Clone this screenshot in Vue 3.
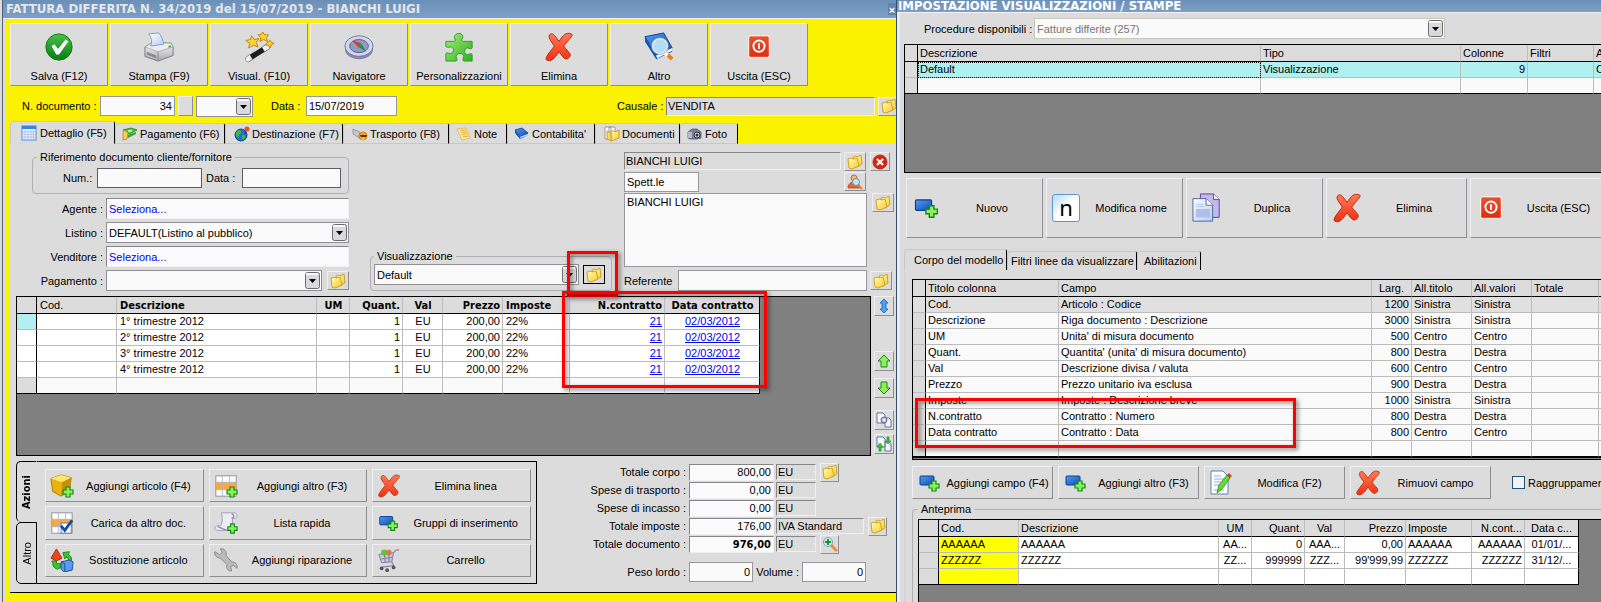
<template>
  <!-- icon sprite -->
  <svg class="sprite" aria-hidden="true">
    <defs>
      <linearGradient id="gGreen" x1="0" y1="0" x2="0" y2="1">
        <stop offset="0" stop-color="#4cc04a" /><stop offset="1" stop-color="#067d12" />
      </linearGradient>
      <linearGradient id="gLime" x1="0" y1="0" x2="1" y2="1">
        <stop offset="0" stop-color="#a4f07a" /><stop offset="1" stop-color="#2fae22" />
      </linearGradient>
      <linearGradient id="gRed" x1="0" y1="0" x2="0" y2="1">
        <stop offset="0" stop-color="#ff7a55" /><stop offset="1" stop-color="#f03010" />
      </linearGradient>
      <linearGradient id="gBlue" x1="0" y1="0" x2="1" y2="1">
        <stop offset="0" stop-color="#4f9cf0" /><stop offset="1" stop-color="#0b4fb5" />
      </linearGradient>
      <linearGradient id="gGold" x1="0" y1="0" x2="1" y2="1">
        <stop offset="0" stop-color="#fffbb4" /><stop offset="1" stop-color="#f9cc2c" />
      </linearGradient>
      <linearGradient id="gGrey" x1="0" y1="0" x2="0" y2="1">
        <stop offset="0" stop-color="#fbfbfb" /><stop offset="1" stop-color="#a9a9ad" />
      </linearGradient>
      <linearGradient id="gPage" x1="0" y1="0" x2="1" y2="1">
        <stop offset="0" stop-color="#ffffff" /><stop offset="1" stop-color="#b9cdf2" />
      </linearGradient>
    </defs>
    <symbol id="check" viewBox="0 0 32 32">
      <circle cx="16" cy="16" r="14" fill="url(#gGreen)" stroke="#0a7a14" />
      <path d="M8 15l3-2 4 5 8-10 3 2-10 14h-3z" fill="#fff" />
    </symbol>
    <symbol id="printer" viewBox="0 0 32 32">
      <path d="M1 16l8-5 20 1 2 4v9l-16 6L1 26z" fill="url(#gGrey)" stroke="#77777c" />
      <path d="M1 16l14 5 16-5-2-4-20-1z" fill="#ededf0" stroke="#8c8c90" stroke-width=".6" />
      <path d="M15 21v10" stroke="#88888c" />
      <path d="M5 2l11-1c2 3 4 6 5 12l-14 2c2-5 1-9-2-13z" fill="url(#gPage)" stroke="#6f9ed2" />
      <path d="M3 21l10 4v3L3 24z" fill="#8a8a8e" /><path d="M26 16l3-1" stroke="#38c43a" stroke-width="2" />
    </symbol>
    <symbol id="wand" viewBox="0 0 32 32">
      <path d="M2 27L24 13l3 5L5 32z" fill="#1c1c1e" /><path d="M2 27l4-3 3 5-4 3c-3 0-4-2-3-5z" fill="#f1f1f4" stroke="#66666a" stroke-width=".6" />
      <path d="M19 16l5-3c2 0 4 3 3 5l-5 3z" fill="#f1f1f4" stroke="#66666a" stroke-width=".6" />
      <g fill="#ffd22e" stroke="#b87806" stroke-width=".9">
        <path d="M8 4l3 4 5-1-3 4 2 5-5-2-5 3 1-5-4-3 5-1z" /><path d="M20 0l2 3h4l-2 3 1 4-4-2-4 2 1-4-3-3 4-1z" />
        <path d="M28 9l1 2 3 1-3 2-1 3-2-3h-3l2-3z" />
      </g>
    </symbol>
    <symbol id="compass" viewBox="0 0 32 32">
      <ellipse cx="16" cy="18" rx="15" ry="11" fill="#8686b4" /><ellipse cx="16" cy="15" rx="15" ry="11" fill="#d4d4ef" stroke="#7272a4" />
      <ellipse cx="16" cy="15" rx="10" ry="7" fill="#8e9cc0" stroke="#5c5c8c" /><path d="M9 9l9 3-3 4z" fill="#e43318" /><path d="M24 21l-9-5 3-4z" fill="#17935a" />
    </symbol>
    <symbol id="puzzle" viewBox="0 0 32 32">
      <path d="M2 10h9c2 0 1-2 0-4 0-6 10-6 9 0-1 2-2 4 1 4h9v7c-1 2-3 0-5 0-4 0-4 7 0 7 2 0 4-2 5 0v7h-9c-2-1 0-3 0-5 0-4-8-4-8 0 0 2 2 4 0 5H2v-8c1-2 3 0 5 0 4-1 4-8 0-7-2 0-5 1-5-1z" fill="url(#gLime)" stroke="#2a9c22" />
    </symbol>
    <symbol id="redx" viewBox="0 0 32 32">
      <path d="M6 3c3-3 5 0 10 7 5-7 7-10 13-8 3 1-1 4-8 13 5 7 9 8 6 12-3 3-5 3-11-6-5 8-9 11-13 9-3-2 3-8 8-15C7 9 4 6 6 3z" fill="url(#gRed)" stroke="#b92408" />
    </symbol>
    <symbol id="booklens" viewBox="0 0 32 32">
      <path d="M1 5l20-4 9 16-17 8z" fill="url(#gBlue)" stroke="#0b3d92" /><path d="M1 5v5l12 19 17-8v-4l-17 8z" fill="#0d57bd" /><path d="M13 25l17-8v3l-16 8z" fill="#fff" />
      <path d="M23 22l7 7" stroke="#f07a1c" stroke-width="4" /><path d="M22 22l3 3" stroke="#fff" stroke-width="4" />
      <circle cx="17" cy="15" r="8" fill="#bfe6fa" fill-opacity=".92" stroke="#e6e6ee" stroke-width="2" /><circle cx="17" cy="15" r="9" fill="none" stroke="#7b8ca8" stroke-width=".6" />
    </symbol>
    <symbol id="power" viewBox="0 0 32 32">
      <rect x="5" y="4" width="22" height="23" rx="2" fill="url(#gRed)" stroke="#fff" />
      <rect x="6" y="5" width="20" height="21" rx="1" fill="#cc2c0c" fill-opacity=".5" />
      <circle cx="16" cy="15" r="6" fill="none" stroke="#fff" stroke-width="2" /><path d="M16 12v6" stroke="#fff" stroke-width="2" />
    </symbol>
    <symbol id="folder" viewBox="0 0 16 16">
      <path d="M6 3l3-1 1 1 4-2 1 9-6 3z" fill="url(#gGold)" stroke="#c4930c" stroke-width=".8" />
      <path d="M1 5l4-1 1 1 4-1 2 8-7 3-3-1z" fill="url(#gGold)" stroke="#c4930c" stroke-width=".8" />
    </symbol>
    <symbol id="sheet" viewBox="0 0 16 16">
      <rect x="1" y="1" width="14" height="14" fill="#eef3ff" stroke="#4a8be0" /><path d="M1 1h14v3H1z" fill="#2e86ea" />
      <path d="M2 7h12M2 9.500h12M2 12h12M4 5v9M7 5v9M10 5v9M12.500 5v9" stroke="#a9bde2" stroke-width=".8" />
    </symbol>
    <symbol id="money" viewBox="0 0 16 16">
      <path d="M1 4l8-2 6 2-8 4z" fill="#4fc83c" stroke="#1c7d18" stroke-width=".8" /><path d="M1 5c2-1 4 0 5 2l-1 6-4 1z" fill="#f5cf56" stroke="#a87a10" stroke-width=".7" />
      <path d="M6 9l8-3v2l-8 4z" fill="#35a42c" /><ellipse cx="8" cy="5" rx="2" ry="1" fill="#d8ffcc" />
    </symbol>
    <symbol id="globe" viewBox="0 0 16 16">
      <circle cx="7" cy="9" r="6" fill="#1d6fd0" stroke="#0d4790" /><path d="M3 5c3-2 5 0 4 2S4 9 5 12c-3-1-4-5-2-7zM8 9c2 0 4 0 3 3l-3 2z" fill="#3fba3e" />
      <path d="M11 8l1-4" stroke="#7a1a08" /><circle cx="13" cy="3" r="2.500" fill="#ec4a2a" />
    </symbol>
    <symbol id="transport" viewBox="0 0 16 16">
      <path d="M1 3l7 3-1 6-6-4z" fill="#c7c7cb" stroke="#8a8a8e" stroke-width=".7" /><circle cx="11" cy="10" r="4" fill="#f5a91c" stroke="#b56b05" stroke-width=".7" />
      <path d="M8 9h7l-1 2H9z" fill="#4e3310" /><circle cx="11" cy="13" r="1.500" fill="#f6c848" />
    </symbol>
    <symbol id="note" viewBox="0 0 16 16">
      <path d="M1 3l9-1 4 10-8 2z" fill="#fdec9c" stroke="#e2b54c" stroke-width=".8" /><path d="M4 5l6-1M5 7l6-1M5.500 9l6-1M6.500 11l6-1" stroke="#dba93a" stroke-width=".9" />
    </symbol>
    <symbol id="book" viewBox="0 0 16 16">
      <path d="M1 4l7-2 6 5-8 4z" fill="url(#gBlue)" stroke="#0b3d92" stroke-width=".8" /><path d="M1 4v3l5 6 8-4V7l-8 4z" fill="#0d57bd" /><path d="M6 11l8-3v1l-8 3z" fill="#fff" />
    </symbol>
    <symbol id="docs" viewBox="0 0 16 16">
      <path d="M1 1h6v12H1zM5 1h6v12H5z" fill="#fff" stroke="#98989c" /><path d="M7 5h3l1 1 4-2v8l-8 3z" fill="url(#gGold)" stroke="#c4930c" stroke-width=".8" /><path d="M3 5l4 2v8l-4-2z" fill="#f9d860" stroke="#c4930c" stroke-width=".8" />
    </symbol>
    <symbol id="camera" viewBox="0 0 16 16">
      <path d="M1 6l4-3h5l4 3v6l-4 1H3l-2-1z" fill="#7d7d95" stroke="#4a4a58" stroke-width=".7" /><rect x="1" y="6" width="4" height="6" fill="#b6b6d0" /><circle cx="10" cy="9" r="3" fill="#d0d0e0" stroke="#34343e" /><circle cx="10" cy="9" r="1.500" fill="#34343e" />
    </symbol>
    <symbol id="error" viewBox="0 0 16 16">
      <circle cx="8" cy="8" r="7" fill="#dc2412" stroke="#96160a" stroke-width=".7" /><path d="M5 5l6 6M11 5l-6 6" stroke="#fff" stroke-width="2.200" />
    </symbol>
    <symbol id="userlens" viewBox="0 0 16 16">
      <circle cx="7" cy="4" r="3" fill="#f4b46c" stroke="#b75a18" stroke-width=".8" /><path d="M1 14c0-4 3-6 6-6s6 2 6 6z" fill="#e3662a" stroke="#a53c10" stroke-width=".7" />
      <path d="M11 11l4 4" stroke="#ee7d28" stroke-width="2" /><circle cx="9" cy="8" r="3.500" fill="#bfe6fa" stroke="#6b8fae" />
    </symbol>
    <symbol id="updown" viewBox="0 0 16 16"><path d="M8 1l4 4h-2v6h2l-4 4-4-4h2V5H4z" fill="#4da2f2" stroke="#1767c0" stroke-width=".9" /></symbol>
    <symbol id="up" viewBox="0 0 16 16"><path d="M8 2l6 6h-3v6H5V8H2z" fill="#8cf05c" stroke="#1a8a14" /></symbol>
    <symbol id="down" viewBox="0 0 16 16"><path d="M8 14l6-6h-3V2H5v6H2z" fill="#8cf05c" stroke="#1a8a14" /></symbol>
    <symbol id="copygear" viewBox="0 0 16 16">
      <path d="M1 1h6l2 2v8H1zM9 6h4l2 2v7H9z" fill="#f5f8ff" stroke="#5c77a8" /><circle cx="8" cy="8" r="3" fill="#c2c2dc" stroke="#66668c" /><circle cx="8" cy="8" r="1" fill="#fff" />
    </symbol>
    <symbol id="copyswap" viewBox="0 0 16 16">
      <path d="M1 1h6l2 2v8H1zM9 6h4l2 2v7H9z" fill="#f5f8ff" stroke="#5c77a8" /><path d="M4 7l3 4H5v4H3v-4H1zM12 8L9 5h2V1h2v4h2z" fill="#3ac42c" stroke="#1a8a14" stroke-width=".6" />
    </symbol>
    <symbol id="plus" viewBox="0 0 12 12"><path d="M4 1h4v3h3v4H8v3H4V8H1V4h3z" fill="#8cf05c" stroke="#0f8a12" stroke-width="1.200" /></symbol>
    <symbol id="box" viewBox="0 0 26 26">
      <path d="M1 5l11-4 11 3-2 15-9 5-9-5z" fill="#e8b40c" stroke="#a87c04" /><path d="M1 5l11-4 11 3-10 5z" fill="#ffe768" /><path d="M13 9l10-5-2 15-9 5z" fill="#c4900a" />
      <use href="#plus" x="13" y="13" width="13" height="13" />
    </symbol>
    <symbol id="cells" viewBox="0 0 26 26">
      <rect x="2" y="2" width="22" height="22" fill="#fff" stroke="#8c8c98" /><path d="M2 9h22v8H2z" fill="#f9a93a" />
      <path d="M2 9h22M2 17h22M9 2v22M17 2v22" stroke="#b4b4c4" />
    </symbol>
    <symbol id="cellsadd" viewBox="0 0 26 26"><use href="#cells" width="26" height="26" /><use href="#plus" x="13" y="13" width="13" height="13" /></symbol>
    <symbol id="cellscheck" viewBox="0 0 26 26">
      <use href="#cells" width="26" height="26" /><rect x="12" y="13" width="11" height="11" fill="#fff" stroke="#5577aa" /><path d="M12 16l4 5 8-11" fill="none" stroke="#0f4cae" stroke-width="3" />
    </symbol>
    <symbol id="scroll" viewBox="0 0 26 26">
      <path d="M8 2h14c4 0 4 6 0 6h-2c0 6 0 9-3 13H4c-4 0-4-5 0-5h3C10 11 9 7 8 2z" fill="#ececf8" stroke="#9c9cb4" /><path d="M19 3c2 0 4 4 0 5M4 17l10 4" stroke="#8c8ca8" fill="none" stroke-width="1.500" />
      <use href="#plus" x="14" y="13" width="12" height="12" />
    </symbol>
    <symbol id="rect" viewBox="0 0 26 26">
      <rect x="3" y="6" width="14" height="9" rx="1" fill="url(#gBlue)" stroke="#0b3d92" /><use href="#plus" x="11" y="10" width="12" height="12" />
    </symbol>
    <symbol id="shapes" viewBox="0 0 26 26">
      <path d="M7 1l6 10-6 3-6-3z" fill="#f0441e" stroke="#aa2808" /><path d="M14 5l7-1-1 3c3 2 4 4 3 7l-3-1c0-2-1-3-3-3l-1 2z" fill="#3cc42c" stroke="#1a8a14" />
      <path d="M2 14l5 0v3l5 0v4l-4 2c-3-1-5-3-5-6z" fill="#3cc42c" stroke="#1a8a14" /><path d="M12 15l9-2 4 2-1 9-9 2-3-3z" fill="#5b9bea" stroke="#1b4d9e" /><path d="M12 15l4 2v9" fill="none" stroke="#1b4d9e" />
    </symbol>
    <symbol id="wrench" viewBox="0 0 26 26">
      <path d="M1 4l5 3 3-2-2-4c4-1 7 3 6 7l6 7c4 0 7 3 6 7l-4-3-3 1 1 5c-4 0-6-3-5-7l-7-7C3 11 0 8 1 4z" fill="#bcbcbe" stroke="#858588" />
    </symbol>
    <symbol id="cart" viewBox="0 0 26 26">
      <path d="M2 7l16-2-2 10-11 1z" fill="#c9c6ea" stroke="#7c7aa4" /><circle cx="8" cy="5" r="3.500" fill="#58c840" /><circle cx="13" cy="5" r="3" fill="#e87838" /><path d="M18 5l3-3h3M16 15l2 4-14 2M4 12l13-2M8 7l1 9M13 6v9" fill="none" stroke="#85858f" stroke-width="1.200" />
      <circle cx="5" cy="22" r="2" fill="#555" /><circle cx="11" cy="24" r="2" fill="#555" /><circle cx="18" cy="21" r="2" fill="#555" />
    </symbol>
    <symbol id="pages" viewBox="0 0 32 32">
      <path d="M9 1h14l6 6v19H9z" fill="#c6b8ec" stroke="#54449a" /><path d="M23 1v6h6" fill="#fff" stroke="#54449a" /><path d="M1 6h14l7 7v17H1z" fill="url(#gPage)" stroke="#42669c" />
      <path d="M15 6v7h7" fill="#fff" stroke="#42669c" /><path d="M4 17h15v9H4z" fill="#aebfe8" /><path d="M4 12h8M4 14.500h9" stroke="#aebfe8" />
    </symbol>
    <symbol id="edit" viewBox="0 0 26 26">
      <path d="M2 1h12l5 5v18H2z" fill="#fff" stroke="#5b84ac" /><path d="M5 6h7M5 9h10M5 12h10M5 15h6M5 20h10" stroke="#93acd0" /><path d="M8 23l2-8 8-10 3 3-8 11z" fill="#68d83c" stroke="#1c8a14" stroke-width=".8" /><path d="M18 5l2-2 3 3-2 2z" fill="#e43c20" />
    </symbol>
    <symbol id="lensplus" viewBox="0 0 16 16">
      <path d="M9 9l6 6" stroke="#f08a3c" stroke-width="3" /><circle cx="6" cy="6" r="4.500" fill="#cdeefa" stroke="#7b9cb8" /><path d="M6 3v6M3 6h6" stroke="#129a1c" stroke-width="2" />
    </symbol>
    <symbol id="arrow" viewBox="0 0 15 17">
      <rect x=".5" y=".5" width="14" height="16" rx="2" fill="#d9d9dd" stroke="#6c6c70" /><path d="M1 1h12v2H1z" fill="#fff" fill-opacity=".8" /><path d="M4 7h7l-3.500 4z" fill="#000" />
    </symbol>
  </svg>

  <div class="desktop">
    <!-- finestra fattura -->
    <section class="window invoice">
      <header class="titlebar">
        <h1>FATTURA DIFFERITA N. 34/2019 del 15/07/2019 - BIANCHI LUIGI</h1>
        <button class="close" aria-label="Chiudi">×</button>
      </header>
      <div class="yellow">
        <div class="toolbar">
          <button v-for="b in toolbar" :key="b.label" class="bevel big">
            <svg class="i32"><use :href="'#' + b.icon" /></svg>
            <span>{{ b.label }}</span>
          </button>
        </div>

        <div class="docrow">
          <label class="l-doc" for="ndoc">N. documento :</label>
          <input id="ndoc" v-model="doc.numero" class="flat num w-doc" />
          <button class="bevel tiny" aria-label="Numerazione"></button>
          <div class="combo w-serie">
            <select aria-label="Serie"><option></option></select>
            <svg class="arrow"><use href="#arrow" /></svg>
          </div>
          <label class="l-data" for="ddoc">Data :</label>
          <input id="ddoc" v-model="doc.data" class="flat w-data" />
          <div class="causale">
            <label for="causale">Causale :</label>
            <input id="causale" class="sunken" value="VENDITA" readonly />
            <button class="bevel pick" aria-label="Scegli causale"><svg class="i16"><use href="#folder" /></svg></button>
          </div>
        </div>

        <nav class="tabs">
          <button v-for="(t, i) in tabs" :key="t.label" :class="['tab', t.size, { active: i === 0 }]">
            <svg class="i16"><use :href="'#' + t.icon" /></svg>
            <span>{{ t.label }}</span>
          </button>
        </nav>

        <div class="page">
          <div class="head">
            <div class="form">
              <fieldset class="group">
                <legend>Riferimento documento cliente/fornitore</legend>
                <div class="refrow">
                  <label for="rnum">Num.:</label>
                  <input id="rnum" class="dark r-num" />
                  <label for="rdata">Data :</label>
                  <input id="rdata" class="dark" />
                </div>
              </fieldset>
              <div class="row">
                <label for="agente">Agente :</label>
                <input id="agente" class="sunken white blue" value="Seleziona..." />
              </div>
              <div class="row">
                <label for="listino">Listino :</label>
                <div class="combo">
                  <select id="listino"><option>DEFAULT(Listino al pubblico)</option></select>
                  <svg class="arrow"><use href="#arrow" /></svg>
                </div>
              </div>
              <div class="row">
                <label for="venditore">Venditore :</label>
                <input id="venditore" class="sunken white blue" value="Seleziona..." />
              </div>
              <div class="row">
                <label for="pagamento">Pagamento :</label>
                <div class="combo">
                  <select id="pagamento"><option></option></select>
                  <svg class="arrow"><use href="#arrow" /></svg>
                </div>
                <button class="bevel pick" aria-label="Scegli pagamento"><svg class="i16"><use href="#folder" /></svg></button>
              </div>
            </div>

            <fieldset class="group view">
              <legend>Visualizzazione</legend>
              <div class="viewrow">
                <div class="combo">
                  <select aria-label="Visualizzazione"><option>Default</option></select>
                  <svg class="arrow"><use href="#arrow" /></svg>
                </div>
                <button class="bevel pick focus" aria-label="Imposta visualizzazioni"><svg class="i16"><use href="#folder" /></svg></button>
              </div>
              <div class="mark mark-view"></div>
            </fieldset>

            <div class="client">
              <div class="line name">
                <input class="sunken" value="BIANCHI LUIGI" aria-label="Cliente" readonly />
                <button class="bevel pick" aria-label="Scegli cliente"><svg class="i16"><use href="#folder" /></svg></button>
                <button class="bevel pick clear" aria-label="Rimuovi cliente"><svg class="i16"><use href="#error" /></svg></button>
              </div>
              <div class="line title">
                <input class="flat" value="Spett.le" aria-label="Titolo" />
                <button class="bevel pick" aria-label="Scheda cliente"><svg class="i16"><use href="#userlens" /></svg></button>
              </div>
              <div class="line addr">
                <textarea aria-label="Indirizzo">BIANCHI LUIGI</textarea>
                <button class="bevel pick" aria-label="Scegli indirizzo"><svg class="i16"><use href="#folder" /></svg></button>
              </div>
              <div class="line refer">
                <label for="referente">Referente</label>
                <input id="referente" class="flat" />
                <button class="bevel pick" aria-label="Scegli referente"><svg class="i16"><use href="#folder" /></svg></button>
              </div>
            </div>
          </div>

          <div class="lines">
            <div class="gridbox">
              <table class="grid rows">
                <colgroup><col v-for="(w, i) in lineWidths" :key="i" :style="{ width: w + 'px' }" /></colgroup>
                <thead>
                  <tr>
                    <th></th><th class="plain">Cod.</th><th>Descrizione</th><th class="c">UM</th><th class="r">Quant.</th><th class="c">Val</th>
                    <th class="r">Prezzo</th><th>Imposte</th><th class="r">N.contratto</th><th class="c">Data contratto</th>
                  </tr>
                </thead>
                <tbody>
                  <tr v-for="n in 4" :key="n">
                    <td :class="{ current: n === 1 }"></td><td></td><td>{{ n }}° trimestre 2012</td><td></td><td class="r">1</td><td class="c">EU</td>
                    <td class="r">200,00</td><td>22%</td><td class="r"><a href="#">21</a></td><td class="c"><a href="#">02/03/2012</a></td>
                  </tr>
                  <tr class="empty"><td v-for="n in 10" :key="n"></td></tr>
                </tbody>
              </table>
              <div class="mark mark-lines"></div>
            </div>
            <div class="side">
              <button v-for="s in side" :key="s.icon" :class="['bevel', s.icon]" :aria-label="s.label">
                <svg class="i16"><use :href="'#' + s.icon" /></svg>
              </button>
            </div>
          </div>

          <div class="foot">
            <div class="actions">
              <div class="vtabs">
                <button class="on"><span>Azioni</span></button>
                <button><span>Altro</span></button>
              </div>
              <div class="actgrid">
                <button v-for="a in actions" :key="a.label" class="bevel wide">
                  <svg class="i24"><use :href="'#' + a.icon" /></svg>
                  <span>{{ a.label }}</span>
                </button>
              </div>
            </div>

            <div class="totals">
              <div v-for="t in totals" :key="t.label" class="trow">
                <label :for="t.id">{{ t.label }} :</label>
                <input :id="t.id" :class="['sunken white num', { bold: t.bold }]" :value="t.value" />
                <input :class="['sunken unit', { long: t.unit !== 'EU' }]" :value="t.unit" :aria-label="t.label + ' unità'" readonly />
                <button v-if="t.icon" class="bevel mini" :aria-label="'Dettaglio ' + t.label"><svg class="i16"><use :href="'#' + t.icon" /></svg></button>
              </div>
              <div class="trow weight">
                <label for="peso">Peso lordo :</label>
                <input id="peso" class="flat num" value="0" />
                <label class="vol" for="volume">Volume :</label>
                <input id="volume" class="flat num" value="0" />
              </div>
            </div>
          </div>
        </div>
      </div>
    </section>

    <!-- finestra impostazioni -->
    <section class="window settings">
      <header class="titlebar low"><h1>IMPOSTAZIONE VISUALIZZAZIONI / STAMPE</h1></header>
      <div class="body">
        <div class="procrow">
          <label for="proc">Procedure disponibili :</label>
          <div class="combo off">
            <select id="proc"><option>Fatture differite (257)</option></select>
            <svg class="arrow"><use href="#arrow" /></svg>
          </div>
        </div>

        <div class="gridbox views">
          <table class="grid">
            <colgroup><col v-for="(w, i) in viewWidths" :key="i" :style="{ width: w + 'px' }" /></colgroup>
            <thead><tr><th></th><th>Descrizione</th><th>Tipo</th><th>Colonne</th><th>Filtri</th><th>A</th></tr></thead>
            <tbody>
              <tr class="selected"><td></td><td class="dotted">Default</td><td>Visualizzazione</td><td class="r">9</td><td></td><td>C</td></tr>
              <tr class="empty"><td v-for="n in 6" :key="n"></td></tr>
            </tbody>
          </table>
        </div>

        <div class="cmds">
          <button v-for="c in commands" :key="c.label" class="bevel wide">
            <span v-if="c.icon === 'n'" class="letter">n</span>
            <svg v-else class="i32"><use :href="'#' + c.icon" /></svg>
            <span>{{ c.label }}</span>
          </button>
        </div>

        <nav class="tabs plain">
          <button class="tab active">Corpo del modello</button>
          <button class="tab t-filtri">Filtri linee da visualizzare</button>
          <button class="tab t-abil">Abilitazioni</button>
        </nav>

        <div class="model">
          <div class="gridbox fields">
            <table class="grid">
              <colgroup><col v-for="(w, i) in fieldWidths" :key="i" :style="{ width: w + 'px' }" /></colgroup>
              <thead>
                <tr><th></th><th>Titolo colonna</th><th>Campo</th><th class="c">Larg.</th><th>All.titolo</th><th>All.valori</th><th>Totale</th><th></th></tr>
              </thead>
              <tbody>
                <tr v-for="(f, i) in fields" :key="f[0]" :class="{ shade: i === 0 }">
                  <td></td><td>{{ f[0] }}</td><td>{{ f[1] }}</td><td class="r">{{ f[2] }}</td><td>{{ f[3] }}</td><td>{{ f[3] }}</td><td></td><td></td>
                </tr>
                <tr><td v-for="n in 8" :key="n"></td></tr>
              </tbody>
            </table>
            <div class="mark mark-fields"></div>
          </div>

          <div class="fieldcmds">
            <button v-for="c in fieldCommands" :key="c.label" class="bevel wide">
              <svg class="i26"><use :href="'#' + c.icon" /></svg>
              <span>{{ c.label }}</span>
            </button>
            <label class="check"><input type="checkbox" />Raggruppamento</label>
          </div>

          <fieldset class="group preview">
            <legend>Anteprima</legend>
            <div class="gridbox">
              <table class="grid rows">
                <colgroup><col v-for="(w, i) in previewWidths" :key="i" :style="{ width: w + 'px' }" /></colgroup>
                <thead>
                  <tr>
                    <th></th><th>Cod.</th><th>Descrizione</th><th class="c">UM</th><th class="r">Quant.</th><th class="c">Val</th>
                    <th class="r">Prezzo</th><th>Imposte</th><th class="r">N.cont...</th><th class="c">Data c...</th>
                  </tr>
                </thead>
                <tbody>
                  <tr v-for="p in preview" :key="p[0]">
                    <td></td>
                    <td v-for="(v, i) in p" :key="i" :class="{ yel: i === 0, c: [2, 4, 8].includes(i), r: [3, 5, 7].includes(i) }">{{ v }}</td>
                  </tr>
                </tbody>
              </table>
            </div>
          </fieldset>
        </div>
      </div>
    </section>
  </div>
</template>

<script setup>
import { reactive } from "vue";

const doc = reactive({ numero: "34", data: "15/07/2019" });

const toolbar = [
  { label: "Salva (F12)", icon: "check" },
  { label: "Stampa (F9)", icon: "printer" },
  { label: "Visual. (F10)", icon: "wand" },
  { label: "Navigatore", icon: "compass" },
  { label: "Personalizzazioni", icon: "puzzle" },
  { label: "Elimina", icon: "redx" },
  { label: "Altro", icon: "booklens" },
  { label: "Uscita (ESC)", icon: "power" },
];

const tabs = [
  { label: "Dettaglio (F5)", icon: "sheet", size: "t1" },
  { label: "Pagamento (F6)", icon: "money", size: "t2" },
  { label: "Destinazione (F7)", icon: "globe", size: "t3" },
  { label: "Trasporto (F8)", icon: "transport", size: "t4" },
  { label: "Note", icon: "note", size: "t5" },
  { label: "Contabilita'", icon: "book", size: "t6" },
  { label: "Documenti", icon: "docs", size: "t7" },
  { label: "Foto", icon: "camera", size: "t5" },
];

const side = [
  { icon: "updown", label: "Sposta" },
  { icon: "up", label: "Su" },
  { icon: "down", label: "Giù" },
  { icon: "copygear", label: "Copia" },
  { icon: "copyswap", label: "Scambia" },
];

const actions = [
  { label: "Aggiungi articolo (F4)", icon: "box" },
  { label: "Aggiungi altro (F3)", icon: "cellsadd" },
  { label: "Elimina linea", icon: "redx" },
  { label: "Carica da altro doc.", icon: "cellscheck" },
  { label: "Lista rapida", icon: "scroll" },
  { label: "Gruppi di inserimento", icon: "rect" },
  { label: "Sostituzione articolo", icon: "shapes" },
  { label: "Aggiungi riparazione", icon: "wrench" },
  { label: "Carrello", icon: "cart" },
];

const totals = [
  { id: "corpo", label: "Totale corpo", value: "800,00", unit: "EU", icon: "folder" },
  { id: "trasporto", label: "Spese di trasporto", value: "0,00", unit: "EU" },
  { id: "incasso", label: "Spese di incasso", value: "0,00", unit: "EU" },
  { id: "imposte", label: "Totale imposte", value: "176,00", unit: "IVA Standard", icon: "folder" },
  { id: "totale", label: "Totale documento", value: "976,00", unit: "EU", icon: "lensplus", bold: true },
];

const commands = [
  { label: "Nuovo", icon: "rect" },
  { label: "Modifica nome", icon: "n" },
  { label: "Duplica", icon: "pages" },
  { label: "Elimina", icon: "redx" },
  { label: "Uscita (ESC)", icon: "power" },
];

const fieldCommands = [
  { label: "Aggiungi campo (F4)", icon: "rect" },
  { label: "Aggiungi altro (F3)", icon: "rect" },
  { label: "Modifica (F2)", icon: "edit" },
  { label: "Rimuovi campo", icon: "redx" },
];

const fields = [
  ["Cod.", "Articolo : Codice", 1200, "Sinistra"],
  ["Descrizione", "Riga documento : Descrizione", 3000, "Sinistra"],
  ["UM", "Unita' di misura documento", 500, "Centro"],
  ["Quant.", "Quantita' (unita' di misura documento)", 800, "Destra"],
  ["Val", "Descrizione divisa / valuta", 600, "Centro"],
  ["Prezzo", "Prezzo unitario iva esclusa", 900, "Destra"],
  ["Imposte", "Imposte : Descrizione breve", 1000, "Sinistra"],
  ["N.contratto", "Contratto : Numero", 800, "Destra"],
  ["Data contratto", "Contratto : Data", 800, "Centro"],
];

const preview = [
  ["AAAAAA", "AAAAAA", "AA...", "0", "AAA...", "0,00", "AAAAAA", "AAAAAA", "01/01/..."],
  ["ZZZZZZ", "ZZZZZZ", "ZZ...", "999999", "ZZZ...", "99'999,99", "ZZZZZZ", "ZZZZZZ", "31/12/..."],
  ["", "", "", "", "", "", "", "", ""],
];

// larghezze colonne delle griglie
const lineWidths = [20, 80, 200, 33, 53, 40, 60, 67, 95, 95];
const viewWidths = [13, 343, 200, 67, 66, 60];
const fieldWidths = [13, 133, 313, 40, 60, 60, 67, 40];
const previewWidths = [20, 80, 200, 33, 53, 40, 61, 66, 53, 54];
</script>

<style>
body {
  background: #dcdcdc;
  overflow: hidden;
}
</style>

<style scoped>
.sprite { position: absolute; width: 0; height: 0; }

.desktop, .desktop * { box-sizing: border-box; }
.desktop {
  display: grid;
  grid-template-columns: 897fr 704fr;
  min-height: 100vh;
  font-family: "Liberation Sans", Arial, sans-serif;
  font-size: 11px;
  line-height: 14px;
  color: #000;
  background: #dcdcdc;
}
.desktop button, .desktop input, .desktop select, .desktop textarea {
  font: inherit;
  color: inherit;
  border-radius: 0;
  outline: none;
}
button, input, select, textarea { margin: 0; }
button { padding: 0; background: #dcdcdc; border: 0; flex: none; }
svg { display: block; flex: none; overflow: visible; }
.i16 { width: 16px; height: 16px; }
.i24 { width: 24px; height: 24px; }
.i26 { width: 26px; height: 26px; }
.i32 { width: 32px; height: 32px; }

.window { min-width: 0; overflow: hidden; display: flex; flex-direction: column; }
.invoice { border-left: 1px solid #55616e; border-right: 1px solid #34506c; margin-left: 2px; }
.titlebar {
  display: flex;
  justify-content: space-between;
  align-items: center;
  height: 19px;
  flex: none;
  padding-left: 3px;
  background: linear-gradient(#6b90b8, #7d9fc7);
  border-bottom: 1px solid #f2f2f4;
  overflow: hidden;
}
.titlebar h1 {
  margin: 0;
  font: bold 13px/18px "DejaVu Sans Condensed", "DejaVu Sans", sans-serif;
  color: #e4e7ec;
  white-space: nowrap;
}
.close { width: 8px; height: 12px; background: #5f84ae; line-height: 12px; }
.titlebar .close { color: #fff; font-weight: bold; }
.titlebar.low { height: 13px; padding-left: 1px; }
.titlebar.low h1 { line-height: 12px; color: #fff; }

.yellow {
  flex: 1;
  padding: 4px 0 9px 4px;
  margin-left: 3px;
  background: #fbf200;
  display: flex;
  flex-direction: column;
}

.bevel {
  border: 1px solid;
  border-color: #f0f0f2 #8e8e92 #8e8e92 #f0f0f2;
  display: flex;
  align-items: center;
  justify-content: center;
}
.toolbar { display: flex; gap: 2px; }
.big { width: 98px; height: 63px; flex-direction: column; justify-content: flex-start; padding-top: 7px; gap: 6px; }
.big .i32 { width: 30px; height: 32px; }

input, textarea { padding: 0 2px; background: #fafafa; min-width: 0; }
.flat { border: 1px solid #98989c; }
.dark { border: 1px solid #5e5e62; }
.sunken { border: 1px solid; border-color: #86868a #f0f0f4 #f0f0f4 #86868a; background: #dcdcdc; padding: 0 1px; }
.white { background: #fbfbfb; padding: 0 2px; }
.blue { color: #0000f0 !important; }
.num { text-align: right; }
label { white-space: nowrap; }

.combo { display: flex; align-items: center; height: 21px; padding-right: 1px; border: 1px solid #909094; background: #fafafa; min-width: 0; }
.combo select { flex: 1; min-width: 0; height: 19px; border: 0; padding: 0 2px; appearance: none; background: transparent; }
.combo .arrow { width: 15px; height: 17px; }
.combo.off { border-color: #c8c8b8; }
.combo.off select { color: #77777a; }

.docrow { display: flex; align-items: center; height: 20px; margin: 10px 0 5px; padding-left: 12px; }
.l-doc { width: 78px; }
.w-doc { width: 75px; height: 20px; }
.tiny { width: 15px; height: 20px; margin: 0 3px; }
.w-serie { width: 57px; }
.l-data { width: 53px; padding-left: 18px; }
.w-data { width: 91px; height: 20px; }
.causale { display: flex; align-items: center; margin-left: auto; gap: 3px; }
.causale label { width: 46px; }
.causale .sunken { width: 209px; height: 19px; }
.causale .pick { margin-right: -4px; }

.pick { width: 22px; height: 19px; }
.focus { border-color: #000; }

.tabs { display: flex; align-items: flex-end; height: 23px; }
.tab {
  display: flex;
  align-items: center;
  gap: 2px;
  height: 21px;
  padding-left: 6px;
  border-top: 1px solid #c8c8cc;
  border-right: 1px solid #000;
  border-bottom: 1px solid #c8c8cc;
  border-left: 1px solid #c8c8cc;
  border-radius: 4px 2px 0 0 !important;
  white-space: nowrap;
}
.tab.active { height: 23px; border-bottom-color: #dcdcdc; padding-left: 10px; gap: 3px; }
.t1 { width: 105px; }
.t2 { width: 110px; }
.t3 { width: 118px; padding-left: 8px; }
.t4 { width: 106px; padding-left: 8px; }
.t5 { width: 58px; }
.t6 { width: 88px; }
.t7 { width: 85px; padding-left: 8px; }

.page { background: #dcdcdc; border-bottom: 1px solid #000; padding: 6px 2px 8px 6px; flex: 1; }
.head { display: flex; align-items: flex-end; }
.form { width: 333px; padding-left: 16px; margin-right: 21px; }
.group { position: relative; margin: 0; padding: 1px 4px 5px; border: 1px solid #b0b0b4; border-radius: 4px; min-width: 0; }
.group legend { padding: 0 3px; height: 14px; }
.refrow { display: flex; align-items: center; gap: 4px; padding: 3px 2px 0 26px; }
.refrow input { width: 99px; height: 20px; }
.refrow .r-num { width: 105px; }
.refrow label { width: 30px; }
.refrow label + input + label { width: 32px; }
.row { display: flex; align-items: center; margin-top: 3px; height: 21px; }
.row:nth-child(2) { margin-top: 4px; }
.row label { width: 71px; text-align: right; margin-right: 3px; }
.row input, .row .combo { flex: 1; height: 21px; }
.row .pick { margin-left: 5px; }
.view { width: 242px; padding-left: 3px; padding-right: 6px; }
.viewrow { display: flex; gap: 4px; align-items: center; }
.viewrow .combo { flex: 1; }
.client { width: 270px; margin-left: auto; align-self: stretch; }
.line { display: flex; }
.name .sunken { width: 217px; height: 18px; margin-right: 3px; }
.name { padding-top: 2px; }
.name .clear { width: 20px; margin-left: 4px; }
.title { margin: 1px 0; justify-content: space-between; width: 242px; }
.title .flat { width: 75px; height: 20px; }
.addr textarea { display: block; width: 243px; height: 74px; resize: none; border: 1px solid #98989c; padding: 1px 2px; margin-right: 5px; }
.refer { align-items: center; margin-top: 3px; }
.refer label { width: 54px; }
.refer .flat { width: 189px; height: 21px; margin-right: 3px; }

.lines { display: flex; gap: 3px; margin-top: 5px; }
.gridbox { position: relative; flex: 1; min-width: 0; background: #808080; border: 1px solid #000; }
.grid { table-layout: fixed; width: 0; border-collapse: separate; border-spacing: 0; }
.grid th, .grid td {
  height: 16px;
  padding: 0 2px;
  line-height: 15px;
  text-align: left;
  font-weight: normal;
  white-space: nowrap;
  overflow: hidden;
  background: #fafafa;
  border-right: 1px solid #bcbcbc;
  border-bottom: 1px solid #bcbcbc;
}
.grid th { height: 17px; background: #dcdcdc; border-bottom-color: #000; }
.grid.rows td { background: #fff; }
.grid tr > :first-child { background: #dcdcdc; border-right-color: #000; }
.grid.rows tr > :last-child { border-right-color: #000; }
.grid tbody tr:last-child td { border-bottom-color: #000; }
.grid .r { text-align: right; }
.grid .c { text-align: center; }
.grid a { color: #0000f0; }
.grid .yel { background: #ffff00 !important; }
.lines .grid th, .lines .grid td { padding-left: 3px; }
.lines .grid th { font-family: "DejaVu Sans Condensed", "DejaVu Sans", sans-serif; font-weight: bold; }
.lines .grid th.plain { font-family: inherit; font-weight: normal; }
.lines .grid tbody td:first-child { background: #fff; }
.lines .grid td.current:first-child { background: #b0f0f0; }
.lines .grid .empty td { background: #fafafa; }
.lines .grid .empty td:first-child { background: #dcdcdc; }
.selected td:not(:first-child) { background: #b0f0f0; }
.selected .dotted { outline: 1px dotted #000; outline-offset: -1px; }
.grid .shade td { background: #e0e0e0; }

.side { display: flex; flex-direction: column; width: 20px; height: 160px; }
.side button { width: 20px; height: 20px; }
.side .up { margin-top: 35px; }
.side .down { margin: 7px 0 12px; }
.side .copyswap { margin-top: 4px; }

/* evidenziazioni rosse */
.mark { position: absolute; border: 3px solid #fe0000; filter: drop-shadow(2px 2px 2px rgba(0, 0, 0, .5)); pointer-events: none; z-index: 2; }
.mark-view { left: 196px; top: -12px; width: 51px; height: 46px; }
.mark-lines { left: 545px; top: -6px; width: 205px; height: 97px; }
.mark-fields { left: 2px; top: 118px; width: 381px; height: 50px; }

.foot { display: flex; justify-content: space-between; margin-top: 5px; }
.actions { display: flex; width: 521px; height: 123px; }
.vtabs { width: 21px; display: flex; flex-direction: column; }
.vtabs button {
  flex: 1;
  display: flex;
  align-items: center;
  justify-content: center;
  border: 1px solid #000;
  border-radius: 5px 0 0 5px !important;
}
.vtabs .on { border-right-color: #dcdcdc; border-bottom: 0; font-family: "DejaVu Sans Condensed", "DejaVu Sans", sans-serif !important; font-weight: bold !important; }
.vtabs span { writing-mode: vertical-rl; transform: rotate(180deg); }
.actgrid {
  flex: 1;
  display: grid;
  grid-template-columns: repeat(3, 1fr);
  gap: 4px 5px;
  padding: 7px 5px 6px 8px;
  border: 1px solid #000;
  border-left: 0;
}
.wide { padding-left: 4px; }
.wide span:last-child { flex: 1; text-align: center; }

.totals { display: flex; flex-direction: column; gap: 2px; padding-top: 3px; width: 308px; }
.trow { display: flex; align-items: center; height: 16px; gap: 2px; }
.trow label { width: 100px; text-align: right; margin-right: 1px; }
.trow .num { width: 85px; height: 17px; }
.unit { width: 40px; height: 16px; }
.unit.long { width: 88px; }
.mini { width: 19px; height: 19px; margin-left: 2px; }
.bold { font-family: "DejaVu Sans Condensed", "DejaVu Sans", sans-serif !important; font-weight: bold !important; }
.weight { height: 20px; margin-top: 8px; }
.weight .flat.num { width: 64px; height: 20px; }
.weight .vol { width: 44px; }

.body { padding: 5px 0 0 4px; border-left: 3px solid #ececf0; flex: 1; display: flex; flex-direction: column; }
.procrow { display: flex; align-items: center; gap: 4px; padding-left: 20px; }
.procrow label { width: 106px; }
.procrow .combo { width: 411px; }
.views { flex: none; height: 129px; margin-top: 5px; overflow: hidden; border-right: 0; }
.cmds { display: flex; gap: 3px; margin: 5px 0 11px 2px; }
.cmds .wide { width: 137px; height: 60px; padding-left: 5px; }
.cmds .wide:nth-child(4) { width: 141px; }
.cmds .wide:nth-child(5) { width: 142px; }
.cmds .i32 { width: 30px; }
.letter { width: 28px; height: 28px; border: 1px solid #5c94d4; border-radius: 3px; background: linear-gradient(135deg, #b8dcff, #fff 50%); font: 22px/24px "Noto Sans", sans-serif; text-align: center; }
.tabs.plain { height: 21px; }
.plain .tab { padding-left: 3px; height: 19px; border-bottom: 0; }
.plain .tab.active { width: 103px; height: 21px; padding-left: 9px; }
.plain .t-filtri { width: 130px; }
.plain .t-abil { width: 64px; padding-left: 6px; }
.model { flex: 1; padding: 9px 0 0 7px; border-left: 1px solid #cfcfd6; display: flex; flex-direction: column; }
.fields { flex: none; border-bottom: 3px double #000; border-right: 0; }
.fields .grid { min-width: 100%; }
.fieldcmds { display: flex; align-items: center; gap: 5px; margin-top: 6px; white-space: nowrap; }
.fieldcmds .wide { width: 141px; height: 33px; }
.check { display: flex; align-items: center; gap: 3px; margin-left: 16px; }
.check input { appearance: none; width: 13px; height: 13px; border: 1px solid #1c5180; background: #f2f2f2; padding: 0; }
.preview { flex: 1; margin-top: 3px; padding: 3px 0 0 5px; border-width: 1px 0 0 1px; display: flex; flex-direction: column; border-radius: 4px 0 0 0; }
.preview .gridbox { min-height: 82px; border-width: 1px 0 0 1px; }
</style>
